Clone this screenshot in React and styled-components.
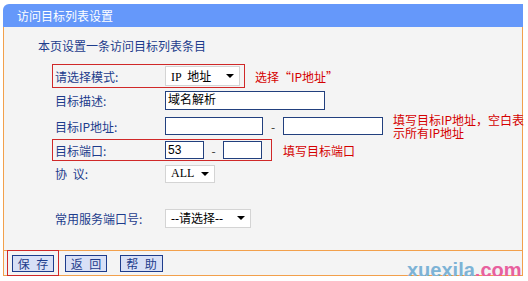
import React from 'react';
import styled, { createGlobalStyle } from 'styled-components';

const GlobalStyle = createGlobalStyle`
    body {
        margin: 0;
        background: #ffffff;
        font-family: "Noto Sans CJK SC", "Liberation Sans", sans-serif;
        font-size: 12px;
    }
`;

const Frame = styled.div`
    position: relative;
    width: 520px;
    margin: 4px 0 0 3px;
`;

const Header = styled.div`
    height: 23px;
    line-height: 23px;
    padding-left: 14px;
    background: #6598fa;
    border-top-left-radius: 6px;
    color: #ffffff;
    font-size: 12px;
`;

const Body = styled.div`
    box-sizing: border-box;
    height: 223px;
    padding-top: 11px;
    background: #f4f4f4;
    border-left: 1px solid #f2a04c;
    border-right: 1px solid #f2a04c;
`;

const Subtitle = styled.div`
    height: 16px;
    line-height: 16px;
    padding-left: 34px;
    color: #1d3c8c;
`;

const Form = styled.div`
    display: flex;
    flex-direction: column;
    margin-top: 10px;
    padding-left: 48px;
`;

const Row = styled.div`
    display: flex;
    align-items: center;
    height: ${(props) => props.h}px;
    margin-top: ${(props) => props.gap || 0}px;
`;

const Box = styled.div`
    box-sizing: border-box;
    display: flex;
    align-items: center;
    align-self: stretch;
    width: ${(props) => props.w}px;
    padding-left: 2px;
    border: 1px solid ${(props) => (props.marked ? '#d02828' : 'transparent')};
`;

const Label = styled.span`
    width: 110px;
    flex-shrink: 0;
    color: #1d3c8c;
    white-space: pre;
    word-spacing: 3px;
`;

const Select = styled.div`
    box-sizing: border-box;
    display: flex;
    align-items: center;
    justify-content: space-between;
    width: ${(props) => props.w}px;
    height: ${(props) => props.h}px;
    padding: 0 5px;
    background: #ffffff;
    border: 1px solid #d4d4d4;
    color: #000000;
    font-family: "Liberation Serif", "Noto Sans CJK SC", serif;
    font-size: 12px;
    white-space: pre;
    word-spacing: 3px;
`;

const Arrow = styled.span`
    width: 0;
    height: 0;
    border-left: 4px solid transparent;
    border-right: 4px solid transparent;
    border-top: 4px solid #000000;
`;

const Input = styled.div`
    box-sizing: border-box;
    width: ${(props) => props.w}px;
    height: ${(props) => props.h || 18}px;
    line-height: ${(props) => (props.h || 18) - 2}px;
    padding-left: 2px;
    background: #ffffff;
    border: 1px solid #22407e;
    color: #000000;
    font-family: "Liberation Sans", "Noto Sans CJK SC", sans-serif;
    font-size: 12px;
`;

const Dash = styled.span`
    width: ${(props) => props.w}px;
    text-align: center;
    color: #333333;
`;

const Hint = styled.span`
    margin-left: ${(props) => props.ml}px;
    color: #d40000;
    line-height: 13px;
    white-space: nowrap;
`;

const Footer = styled.div`
    display: flex;
    align-items: center;
    height: 24px;
    padding-left: 3px;
    background: #f4f4f4;
    border: 1px solid #f2a04c;
`;

const SaveMark = styled.div`
    display: flex;
    align-items: center;
    align-self: stretch;
    margin: -1px 0;
    padding: 0 4px;
    border: 1px solid #d02828;
`;

const Button = styled.div`
    box-sizing: border-box;
    width: ${(props) => props.w || 42}px;
    height: 17px;
    line-height: 15px;
    margin-left: ${(props) => props.ml || 0}px;
    text-align: center;
    background: #d8e0f6;
    border: 1px solid #1d3c8c;
    color: #1d3c8c;
    font-size: 12px;
    white-space: pre;
    word-spacing: 4px;
`;

const Watermark = styled.div`
    position: absolute;
    left: 404px;
    top: 256px;
    font-family: "Liberation Sans", sans-serif;
    font-weight: bold;
    font-size: 20px;
    line-height: 20px;
    color: #7db3d6;
    span {
        color: #e8609e;
    }
`;

export default function App() {
    return (
        <>
            <GlobalStyle />
            <Frame>
                <Header>访问目标列表设置</Header>
                <Body>
                    <Subtitle>本页设置一条访问目标列表条目</Subtitle>
                    <Form>
                        <Row h={24}>
                            <Box w={193} marked>
                                <Label>请选择模式:</Label>
                                <Select w={75} h={20}>
                                    IP 地址
                                    <Arrow />
                                </Select>
                            </Box>
                            <Hint ml={10}>选择“IP地址”</Hint>
                        </Row>
                        <Row h={25}>
                            <Box w={300}>
                                <Label>目标描述:</Label>
                                <Input w={160} h={19}>域名解析</Input>
                            </Box>
                        </Row>
                        <Row h={26}>
                            <Box w={334}>
                                <Label>目标IP地址:</Label>
                                <Input w={98} />
                                <Dash w={20}>-</Dash>
                                <Input w={100} />
                            </Box>
                            <Hint ml={9}>
                                填写目标IP地址，空白表
                                <br />
                                示所有IP地址
                            </Hint>
                        </Row>
                        <Row h={22}>
                            <Box w={220} marked>
                                <Label>目标端口:</Label>
                                <Input w={39}>53</Input>
                                <Dash w={19}>-</Dash>
                                <Input w={39} />
                            </Box>
                            <Hint ml={11}>填写目标端口</Hint>
                        </Row>
                        <Row h={25}>
                            <Box w={200}>
                                <Label>协 议:</Label>
                                <Select w={50} h={18}>
                                    ALL
                                    <Arrow />
                                </Select>
                            </Box>
                        </Row>
                        <Row h={26} gap={19}>
                            <Box w={220}>
                                <Label>常用服务端口号:</Label>
                                <Select w={86} h={19}>
                                    --请选择--
                                    <Arrow />
                                </Select>
                            </Box>
                        </Row>
                    </Form>
                </Body>
                <Footer>
                    <SaveMark>
                        <Button>保 存</Button>
                    </SaveMark>
                    <Button ml={6}>返 回</Button>
                    <Button ml={13} w={43}>帮 助</Button>
                </Footer>
                <Watermark>
                    xuexila<span>.com</span>
                </Watermark>
            </Frame>
        </>
    );
}
